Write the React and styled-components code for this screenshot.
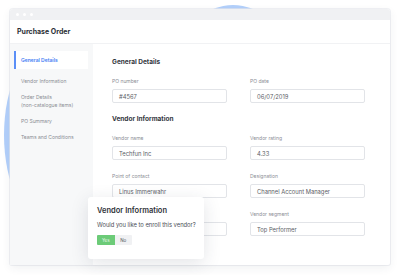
import React from 'react'
import styled, { createGlobalStyle } from 'styled-components'

const GlobalStyle = createGlobalStyle`
    html, body {
        margin: 0;
        padding: 0;
        background: #ffffff;
    }
    body {
        font-family: Inter, "Open Sans", sans-serif;
        -webkit-font-smoothing: antialiased;
    }
`

const sideItems = [
    { label: 'General Details', active: true },
    { label: 'Vendor Information' },
    { label: 'Order Details', sub: '(non-catalogue items)' },
    { label: 'PO Summary' },
    { label: 'Teams and Conditions' },
]

const sections = [
    {
        title: 'General Details',
        rows: [
            [{ label: 'PO number', value: '#4567' }, { label: 'PO date', value: '06/07/2019' }],
        ],
    },
    {
        title: 'Vendor Information',
        rows: [
            [{ label: 'Vendor name', value: 'Techfun Inc' }, { label: 'Vendor rating', value: '4.33' }],
            [{ label: 'Point of contact', value: 'Linus Immerwahr' }, { label: 'Designation', value: 'Channel Account Manager' }],
            [{ label: '', value: '' }, { label: 'Vendor segment', value: 'Top Performer' }],
        ],
    },
]

const App = () => (
    <Page>
        <GlobalStyle/>
        <Blob w={100} h={100} left={183} top={5}/>
        <Blob w={90} h={180} left={4} top={45}/>
        <Window>
            <TitleBar>
                <Dot/><Dot/><Dot/>
            </TitleBar>
            <Header>Purchase Order</Header>
            <Body>
                <Sidebar>
                    {sideItems.map(item => (
                        <SideItem key={item.label} active={item.active}>
                            {item.label}
                            {item.sub && <><br/>{item.sub}</>}
                        </SideItem>
                    ))}
                </Sidebar>
                <Main>
                    {sections.map(section => (
                        <Section key={section.title}>
                            <SectionTitle>{section.title}</SectionTitle>
                            {section.rows.map((row, i) => (
                                <Row key={i}>
                                    {row.map((field, j) => (
                                        <Field key={j}>
                                            <Label>{field.label}</Label>
                                            <Input>{field.value}</Input>
                                        </Field>
                                    ))}
                                </Row>
                            ))}
                        </Section>
                    ))}
                </Main>
            </Body>
            <Popup>
                <PopupTitle>Vendor Information</PopupTitle>
                <PopupText>Would you like to enroll this vendor?</PopupText>
                <Buttons>
                    <Choice primary>Yes</Choice>
                    <Choice>No</Choice>
                </Buttons>
            </Popup>
        </Window>
    </Page>
)

const Page = styled.div`
    position: relative;
    width: 397px;
    height: 275px;
    overflow: hidden;
    padding: 9px 7px 0 10px;
    box-sizing: border-box;
`

const Blob = styled.div`
    position: absolute;
    left: ${props => props.left}px;
    top: ${props => props.top}px;
    width: ${props => props.w}px;
    height: ${props => props.h}px;
    border-radius: 50%;
    background: #b3d0fb;
`

const Window = styled.div`
    position: relative;
    width: 380px;
    height: 256px;
    background: #ffffff;
    border-radius: 3px 3px 2px 2px;
    box-shadow: 0 3px 10px rgba(40, 50, 70, 0.07), 0 0 0 1px rgba(232, 234, 238, 0.6);
    display: flex;
    flex-direction: column;
`

const TitleBar = styled.div`
    height: 11px;
    background: #f0f1f3;
    border-radius: 3px 3px 0 0;
    display: flex;
    align-items: center;
    gap: 4px;
    padding-left: 6px;
`

const Dot = styled.span`
    width: 3px;
    height: 3px;
    border-radius: 50%;
    background: #ffffff;
`

const Header = styled.div`
    height: 23px;
    display: flex;
    align-items: center;
    padding-left: 7px;
    font-size: 7px;
    font-weight: 700;
    color: #2c2f36;
    border-bottom: 1px solid #f1f2f4;
`

const Body = styled.div`
    flex: 1;
    display: flex;
`

const Sidebar = styled.div`
    width: 83px;
    background: #f7f8f9;
    padding: 7px 5px 0 4px;
    box-sizing: border-box;
    display: flex;
    flex-direction: column;
`

const SideItem = styled.div`
    font-size: 5px;
    line-height: 8px;
    color: ${props => props.active ? '#3f7cf4' : '#8a8d94'};
    font-weight: ${props => props.active ? 600 : 400};
    background: ${props => props.active ? '#ffffff' : 'transparent'};
    border-left: 2px solid ${props => props.active ? '#5b8ff7' : 'transparent'};
    padding: ${props => props.active ? '5px' : '4px'} 0 ${props => props.active ? '5px' : '4px'} 5px;
    margin-bottom: ${props => props.active ? '4px' : '0'};
`

const Main = styled.div`
    flex: 1;
    padding: 13px 25px 0 19px;
    display: flex;
    flex-direction: column;
    gap: 11px;
`

const Section = styled.div`
    display: flex;
    flex-direction: column;
    gap: 12px;
`

const SectionTitle = styled.div`
    font-size: 6.5px;
    line-height: 10px;
    font-weight: 700;
    color: #33363d;
    margin-bottom: -2px;
`

const Row = styled.div`
    display: flex;
    gap: 23px;
`

const Field = styled.div`
    width: 115px;
    display: flex;
    flex-direction: column;
    gap: 4px;
`

const Label = styled.div`
    height: 8px;
    font-size: 5px;
    line-height: 8px;
    color: #8b8e95;
`

const Input = styled.div`
    height: 14px;
    box-sizing: border-box;
    border: 1px solid #e2e4e8;
    border-radius: 2px;
    padding-left: 6px;
    display: flex;
    align-items: center;
    font-size: 5.8px;
    color: #5b5e66;
`

const Popup = styled.div`
    position: absolute;
    left: 78px;
    top: 188px;
    width: 116px;
    height: 62px;
    box-sizing: border-box;
    background: #ffffff;
    border-radius: 3px;
    box-shadow: 0 4px 18px rgba(40, 50, 70, 0.13);
    padding: 9px 0 0 9px;
`

const PopupTitle = styled.div`
    font-size: 7.5px;
    line-height: 10px;
    font-weight: 600;
    color: #2f3238;
`

const PopupText = styled.div`
    font-size: 5.8px;
    line-height: 8px;
    color: #4a4d54;
    margin-top: 5px;
`

const Buttons = styled.div`
    display: flex;
    margin-top: 6px;
`

const Choice = styled.div`
    width: 17.5px;
    height: 10px;
    display: flex;
    align-items: center;
    justify-content: center;
    font-size: 4.5px;
    color: ${props => props.primary ? '#e9f8eb' : '#555860'};
    background: ${props => props.primary ? '#6ccb78' : '#f0f1f3'};
    border-radius: ${props => props.primary ? '1px 0 0 1px' : '0 1px 1px 0'};
`

export default App
